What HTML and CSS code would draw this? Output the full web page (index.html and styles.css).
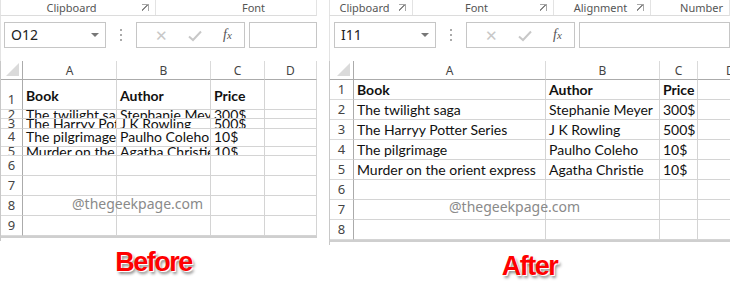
FILE: index.html
```html
<!DOCTYPE html>
<html lang="en">
<head>
  <meta charset="UTF-8">
  <title>Before / After</title>
  <link rel="stylesheet" href="styles.css">
</head>
<body>

  <div class="compare">
    <!-- before -->
    <div class="panel panel-before">
      <div class="ribbon">
        <div class="group g-clip"><span class="group-label">Clipboard</span><span class="launcher"></span></div>
        <div class="group g-font"><span class="group-label">Font</span></div>
      </div>

      <div class="formula-bar">
        <div class="name-box">O12<span class="drop"></span></div>
        <div class="dots"><i></i><i></i><i></i></div>
        <div class="fx-buttons">
          <span class="fx-btn">&#x2715;</span>
          <span class="fx-btn check"><svg width="14" height="12" viewBox="0 0 14 12"><path d="M1 6.5 L5 10 L13 1.5" fill="none" stroke="#c8c8c8" stroke-width="2"/></svg></span>
          <span class="fx-btn fx"><i>f</i><i>x</i></span>
        </div>
        <div class="fx-input"></div>
      </div>

      <div class="sheet sheet-before">
        <div class="corner"><span></span></div><div class="col-h">A</div><div class="col-h">B</div><div class="col-h">C</div><div class="col-h">D</div>

        <div class="row-h">1</div><div class="cell b">Book</div><div class="cell b">Author</div><div class="cell b">Price</div><div class="cell"></div>
        <div class="row-h short">2</div><div class="cell short">The twilight saga</div><div class="cell short">Stephanie Meyer</div><div class="cell short">300$</div><div class="cell"></div>
        <div class="row-h short">3</div><div class="cell short">The Harryy Potter Series</div><div class="cell short">J K Rowling</div><div class="cell short">500$</div><div class="cell"></div>
        <div class="row-h">4</div><div class="cell">The pilgrimage</div><div class="cell">Paulho Coleho</div><div class="cell">10$</div><div class="cell"></div>
        <div class="row-h short">5</div><div class="cell short">Murder on the orient express</div><div class="cell short">Agatha Christie</div><div class="cell short">10$</div><div class="cell"></div>
        <div class="row-h">6</div><div class="cell"></div><div class="cell"></div><div class="cell"></div><div class="cell"></div>
        <div class="row-h">7</div><div class="cell"></div><div class="cell"></div><div class="cell"></div><div class="cell"></div>
        <div class="row-h">8</div><div class="cell"></div><div class="cell"></div><div class="cell"></div><div class="cell"></div>
        <div class="row-h">9</div><div class="cell"></div><div class="cell"></div><div class="cell"></div><div class="cell"></div>

        <div class="watermark">@thegeekpage.com</div>
      </div>
      <div class="sheet-end"></div>

      <div class="caption">Before</div>
    </div>

    <!-- after -->
    <div class="panel panel-after">
      <div class="ribbon">
        <div class="group g-clip"><span class="group-label">Clipboard</span><span class="launcher"></span></div>
        <div class="group g-font"><span class="group-label">Font</span><span class="launcher"></span></div>
        <div class="group g-align"><span class="group-label">Alignment</span><span class="launcher"></span></div>
        <div class="group g-num"><span class="group-label">Number</span></div>
      </div>

      <div class="formula-bar">
        <div class="name-box">I11<span class="drop"></span></div>
        <div class="dots"><i></i><i></i><i></i></div>
        <div class="fx-buttons">
          <span class="fx-btn">&#x2715;</span>
          <span class="fx-btn check"><svg width="14" height="12" viewBox="0 0 14 12"><path d="M1 6.5 L5 10 L13 1.5" fill="none" stroke="#c8c8c8" stroke-width="2"/></svg></span>
          <span class="fx-btn fx"><i>f</i><i>x</i></span>
        </div>
        <div class="fx-input"></div>
      </div>

      <div class="sheet sheet-after">
        <div class="corner"><span></span></div><div class="col-h">A</div><div class="col-h">B</div><div class="col-h">C</div><div class="col-h">D</div>

        <div class="row-h">1</div><div class="cell b">Book</div><div class="cell b">Author</div><div class="cell b">Price</div><div class="cell"></div>
        <div class="row-h">2</div><div class="cell">The twilight saga</div><div class="cell">Stephanie Meyer</div><div class="cell">300$</div><div class="cell"></div>
        <div class="row-h">3</div><div class="cell">The Harryy Potter Series</div><div class="cell">J K Rowling</div><div class="cell">500$</div><div class="cell"></div>
        <div class="row-h">4</div><div class="cell">The pilgrimage</div><div class="cell">Paulho Coleho</div><div class="cell">10$</div><div class="cell"></div>
        <div class="row-h">5</div><div class="cell">Murder on the orient express</div><div class="cell">Agatha Christie</div><div class="cell">10$</div><div class="cell"></div>
        <div class="row-h">6</div><div class="cell"></div><div class="cell"></div><div class="cell"></div><div class="cell"></div>
        <div class="row-h">7</div><div class="cell"></div><div class="cell"></div><div class="cell"></div><div class="cell"></div>
        <div class="row-h">8</div><div class="cell"></div><div class="cell"></div><div class="cell"></div><div class="cell"></div>

        <div class="watermark">@thegeekpage.com</div>
      </div>
      <div class="sheet-end"></div>

      <div class="caption">After</div>
    </div>
  </div>

</body>
</html>
```

FILE: styles.css
```css
* {
  box-sizing: border-box;
  margin: 0;
  padding: 0;
}

body {
  background: #fff;
  width: 730px;
  height: 287px;
  overflow: hidden;
  font-family: 'Noto Sans', 'Open Sans', sans-serif;
  color: #444;
}

.compare {
  display: flex;
  gap: 12px;
}

.panel {
  position: relative;
  overflow: hidden;
  flex: 0 0 auto;
}

.panel-before {
  width: 317px;
}

.panel-after {
  width: 401px;
}

/* ribbon group names */
.ribbon {
  display: flex;
  height: 16px;
  border-bottom: 1px solid #dcdcdc;
  border-left: 1px solid #e3e3e3;
  border-right: 1px solid #e3e3e3;
}

.group {
  display: flex;
  align-items: center;
  flex: 0 0 auto;
  border-right: 1px solid #e3e3e3;
  font-size: 11px;
  line-height: 14px;
  color: #555;
}

.group-label {
  flex: 1;
  text-align: center;
}

.launcher {
  width: 7px;
  height: 7px;
  margin-right: 6px;
  border: 1px solid #a8a8a8;
  border-width: 0 0 1px 1px;
  transform: scaleX(-1) scaleY(-1);
  background: linear-gradient(135deg, transparent 45%, #888 45%, #888 60%, transparent 60%);
}

.panel-before .g-clip { width: 155px; }
.panel-before .g-font { width: 190px; padding-left: 6px; }
.panel-after .g-clip { width: 83px; }
.panel-after .g-font { width: 141px; }
.panel-after .g-align { width: 97px; padding-left: 10px; }
.panel-after .g-num { width: 110px; padding-right: 8px; }

/* formula bar */
.formula-bar {
  display: flex;
  align-items: center;
  height: 45px;
  padding: 0 0 8px 3px;
  border-left: 1px solid #e3e3e3;
}

.panel-after .formula-bar {
  padding-left: 4px;
}

.name-box {
  position: relative;
  width: 102px;
  height: 26px;
  border: 1px solid #c6c6c6;
  font-size: 14px;
  line-height: 24px;
  padding-left: 6px;
  color: #222;
}

.drop {
  position: absolute;
  right: 6px;
  top: 10px;
  border-left: 4px solid transparent;
  border-right: 4px solid transparent;
  border-top: 4px solid #777;
}

.dots {
  display: flex;
  flex-direction: column;
  gap: 3px;
  width: 30px;
  align-items: center;
}

.dots i {
  width: 2px;
  height: 2px;
  background: #aaa;
}

.fx-buttons {
  display: flex;
  align-items: center;
  width: 109px;
  height: 26px;
  border: 1px solid #c6c6c6;
  padding-left: 8px;
}

.fx-btn {
  width: 36px;
  text-align: center;
  color: #c8c8c8;
  font-size: 15px;
  line-height: 24px;
}

.fx-btn.check svg {
  vertical-align: -1px;
}

.fx-btn.fx {
  font-family: 'Liberation Serif', serif;
  color: #555;
  font-size: 14px;
}

.fx-btn.fx i:last-child {
  font-size: 11px;
}

.fx-input {
  flex: 1;
  height: 26px;
  margin-left: 4px;
  border: 1px solid #c6c6c6;
}

/* the sheet */
.sheet {
  position: relative;
  display: grid;
  border-left: 1px solid #c8c8c8;
}

.sheet-before {
  grid-template-columns: 22px 94px 94px 54px 52px;
  grid-template-rows: 19px 30px 9px 10px 18px 9px 20px 20px 20px 20px;
}

.sheet-after {
  grid-template-columns: 24px 192px 114px 38px 66px;
  grid-template-rows: 19px repeat(8, 20px);
}

.corner,
.col-h,
.row-h,
.cell {
  overflow: hidden;
  white-space: nowrap;
}

.corner {
  border-right: 1px solid #ababab;
  border-bottom: 1px solid #ababab;
  position: relative;
}

.corner span {
  position: absolute;
  right: 3px;
  bottom: 3px;
  border-left: 13px solid transparent;
  border-bottom: 13px solid #dadada;
}

.col-h {
  border-right: 1px solid #dadada;
  border-bottom: 1px solid #ababab;
  text-align: center;
  font-size: 12px;
  line-height: 19px;
  color: #444;
}

.row-h {
  display: flex;
  align-items: flex-end;
  justify-content: center;
  border-right: 1px solid #ababab;
  border-bottom: 1px solid #dadada;
  font-size: 13px;
  line-height: 19px;
  color: #444;
}

.cell {
  display: flex;
  align-items: flex-end;
  padding-left: 3px;
  border-right: 1px solid #d4d4d4;
  border-bottom: 1px solid #d4d4d4;
  font-family: 'Lato', 'Liberation Sans', sans-serif;
  font-size: 14px;
  line-height: 19px;
  color: #111;
}

.cell.short,
.row-h.short {
  align-items: center;
}

.cell.b {
  font-weight: bold;
}

.sheet-before .cell.b {
  padding-bottom: 4px;
}

.watermark {
  position: absolute;
  font-family: 'Noto Sans', sans-serif;
  font-size: 14px;
  color: #8a8a8a;
}

.sheet-before .watermark {
  left: 71px;
  top: 133px;
}

.sheet-after .watermark {
  left: 119px;
  top: 136px;
}

.sheet-end {
  height: 5px;
  border-top: 2px solid #cfcfcf;
  border-left: 1px solid #c8c8c8;
}

/* before / after label */
.caption {
  padding-top: 6px;
  text-align: center;
  font-family: 'Liberation Sans', Arial, sans-serif;
  font-weight: bold;
  font-size: 27px;
  letter-spacing: -1.5px;
  color: #ff0000;
  text-shadow: 1px 1px 0 #fff, 2px 3px 3px #8c8c8c;
}

.panel-before .caption {
  padding-right: 10px;
}
```
